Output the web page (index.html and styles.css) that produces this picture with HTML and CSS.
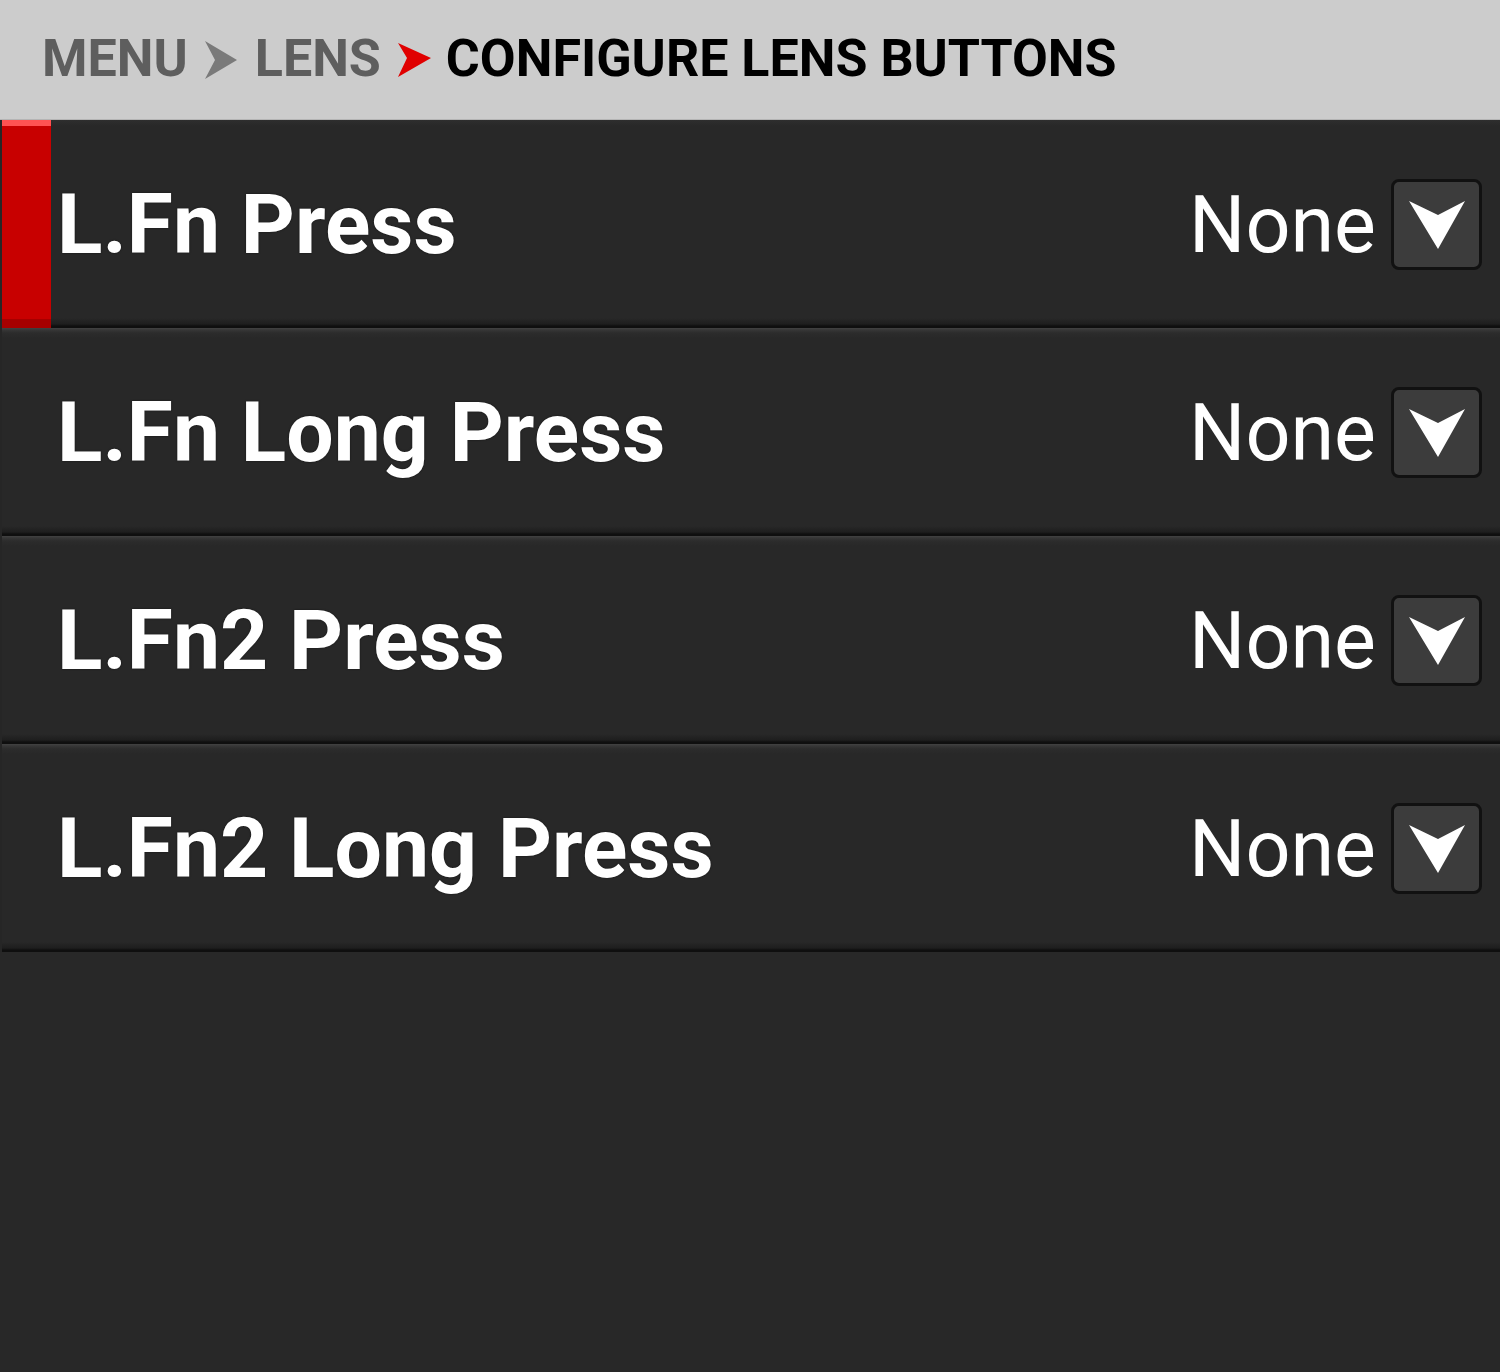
FILE: index.html
```html
<!DOCTYPE html>
<html>
<head>
<meta charset="utf-8">
<link rel="stylesheet" href="styles.css">
</head>
<body>
<header class="crumbs">
  <span class="crumb">MENU</span>
  <svg class="sep sep-gray" width="33" height="38" viewBox="0 0 33 38"><polygon points="0,0 32,19 0,38 10,19" fill="#7a7a7a"/></svg>
  <span class="crumb">LENS</span>
  <svg class="sep sep-red" width="33" height="34" viewBox="0 0 33 34"><polygon points="0,0 33,15 0,34 9,15" fill="#e00000"/></svg>
  <span class="crumb current">CONFIGURE LENS BUTTONS</span>
</header>
<main class="list">
  <div class="row selected">
    <div class="marker"></div>
    <div class="label">L.Fn Press</div>
    <div class="value">None</div>
    <div class="dd"><svg width="85" height="85" viewBox="0 0 85 85"><polygon points="15,19 44,33 71,19 44,67" fill="#fff"/></svg></div>
  </div>
  <div class="row">
    <div class="marker"></div>
    <div class="label">L.Fn Long Press</div>
    <div class="value">None</div>
    <div class="dd"><svg width="85" height="85" viewBox="0 0 85 85"><polygon points="15,19 44,33 71,19 44,67" fill="#fff"/></svg></div>
  </div>
  <div class="row">
    <div class="marker"></div>
    <div class="label">L.Fn2 Press</div>
    <div class="value">None</div>
    <div class="dd"><svg width="85" height="85" viewBox="0 0 85 85"><polygon points="15,19 44,33 71,19 44,67" fill="#fff"/></svg></div>
  </div>
  <div class="row">
    <div class="marker"></div>
    <div class="label">L.Fn2 Long Press</div>
    <div class="value">None</div>
    <div class="dd"><svg width="85" height="85" viewBox="0 0 85 85"><polygon points="15,19 44,33 71,19 44,67" fill="#fff"/></svg></div>
  </div>
</main>
</body>
</html>
```
FILE: styles.css
```css
html, body {
  margin: 0;
  padding: 0;
  height: 100%;
}
body {
  background: #282828;
  font-family: Roboto, "Liberation Sans", sans-serif;
  overflow: hidden;
}
.crumbs {
  height: 120px;
  background: #cccccc;
  border-bottom: 1px solid #b4b4b4;
  display: flex;
  align-items: center;
  padding-left: 42px;
  box-sizing: border-box;
}
.crumb {
  font-size: 52px;
  font-weight: 700;
  color: #5e5e5e;
  line-height: 1;
  margin-top: -2px;
}
.crumb.current {
  color: #000;
}
.sep {
  display: block;
  flex: none;
}
.sep-gray {
  margin: 0 17px 0 17px;
}
.sep-red {
  margin: 0 15px 0 17px;
}
.list {
  display: flex;
  flex-direction: column;
}
.row {
  height: 208px;
  display: flex;
  align-items: center;
  padding-right: 18px;
  background: linear-gradient(to bottom,
    #424242 0, #363636 2px, #2c2c2c 5px, #282828 10px,
    #282828 calc(100% - 10px), #1e1e1e calc(100% - 4px), #0f0f0f calc(100% - 2px), #0f0f0f 100%);
  border-left: 2px solid #262626;
}
.row:first-child {
  background: linear-gradient(to bottom,
    #2e2e2e 0, #282828 6px,
    #282828 calc(100% - 10px), #1e1e1e calc(100% - 4px), #0f0f0f calc(100% - 2px), #0f0f0f 100%);
}
.marker {
  width: 49px;
  align-self: stretch;
  flex: none;
}
.row.selected .marker {
  background: linear-gradient(to bottom,
    #ff5252 0, #ff5252 6px, #c80000 6px,
    #c80000 calc(100% - 9px), #a60000 calc(100% - 9px), #a60000 100%);
}
.label {
  flex: 1;
  margin-left: 6px;
  font-size: 84px;
  font-weight: 700;
  color: #fff;
  line-height: 1;
  text-shadow: 0 0 2px rgba(0,0,0,0.6);
  margin-top: 2px;
}
.value {
  font-size: 79px;
  font-weight: 400;
  color: #fff;
  line-height: 1;
  margin-right: 15px;
  margin-top: 2px;
}
.dd {
  width: 85px;
  height: 85px;
  border: 3px solid #111;
  border-radius: 8px;
  background: #3c3c3c;
  flex: none;
}
.dd svg {
  display: block;
}
```
